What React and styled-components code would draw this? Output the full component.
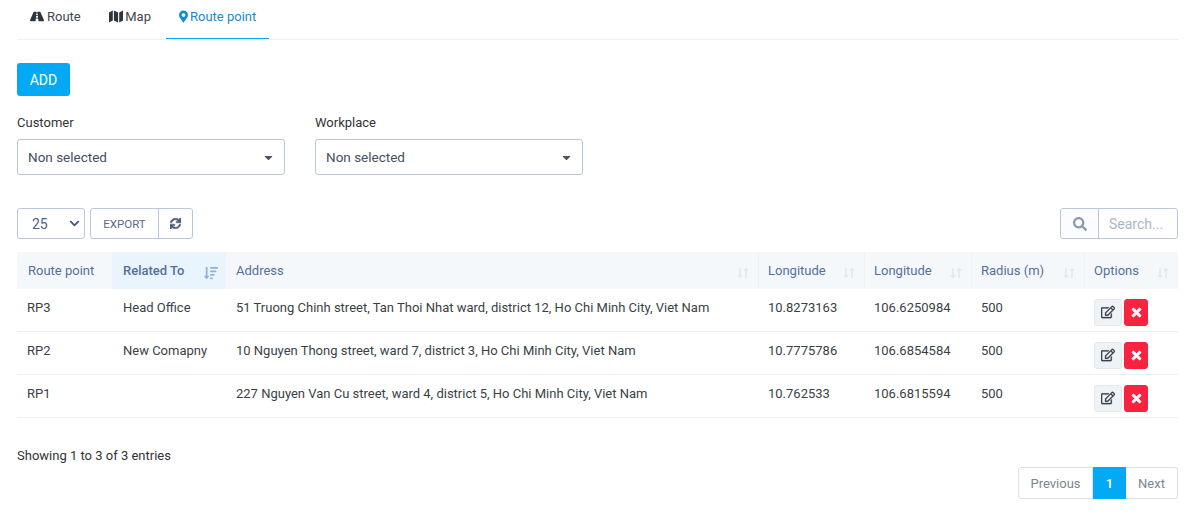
import { createGlobalStyle, styled } from "styled-components";
import {
  FaRoad,
  FaMapMarkerAlt,
  FaSearch,
  FaTimes,
  FaSync,
  FaRegEdit,
  FaCaretDown,
  FaChevronDown,
  FaSortAmountDown,
  FaLongArrowAltUp,
  FaLongArrowAltDown,
} from "react-icons/fa";

const GlobalStyle = createGlobalStyle`
  html, body {
    margin: 0;
    background: #fff;
    font-family: Roboto, "Liberation Sans", sans-serif;
    font-size: 13px;
    color: #333;
    overflow: hidden;
  }
`;

const Page = styled.div`
  padding: 0 13px 0 17px;
  height: 513px;
  box-sizing: border-box;
`;

const Tabs = styled.div`
  display: flex;
  gap: 2px;
  height: 40px;
  border-bottom: 1px solid #eceff3;
  box-sizing: border-box;
`;

const Tab = styled.div`
  display: flex;
  align-items: center;
  gap: ${(p) => p.$gap}px;
  height: 39px;
  padding: 0 13px 5px;
  box-sizing: border-box;
  color: ${(p) => (p.$active ? "#1e88c9" : "#3f4650")};
  border-bottom: 1px solid ${(p) => (p.$active ? "#03a9f4" : "transparent")};
  svg {
    width: ${(p) => (p.$active ? 9 : 14)}px;
    height: 13px;
    color: ${(p) => (p.$active ? "#0f8fd0" : "#2f3540")};
  }
`;

const AddButton = styled.button`
  display: block;
  width: 53px;
  height: 33px;
  margin-top: 23px;
  padding: 0;
  border: 0;
  border-radius: 3px;
  background: #03a9f4;
  color: #fff;
  font: 400 14px Roboto, sans-serif;
`;

const Filters = styled.div`
  display: flex;
  gap: 30px;
  margin-top: 18px;
`;

const Field = styled.div`
  width: 268px;
`;

const Label = styled.div`
  height: 17px;
  line-height: 17px;
  margin-bottom: 8px;
  color: #333;
`;

const Picker = styled.div`
  display: flex;
  align-items: center;
  justify-content: space-between;
  height: 36px;
  padding: 0 9px 0 10px;
  box-sizing: border-box;
  border: 1px solid #b9c7d8;
  border-radius: 3px;
  font-size: 13.5px;
  color: #47505c;
  svg {
    font-size: 13px;
    color: #4a5462;
  }
`;

const Toolbar = styled.div`
  display: flex;
  align-items: stretch;
  height: 31px;
  margin-top: 33px;
`;

const PageSize = styled.div`
  display: flex;
  align-items: center;
  justify-content: space-between;
  width: 68px;
  box-sizing: border-box;
  padding: 0 4px 0 14px;
  margin-right: 5px;
  border: 1px solid #b9c7d8;
  border-radius: 3px;
  font-size: 14px;
  color: #4a6288;
  svg {
    font-size: 11px;
    color: #3c5a86;
  }
`;

const ButtonGroup = styled.div`
  display: flex;
  border: 1px solid #b9c7d8;
  border-radius: 3px;
`;

const GroupButton = styled.div`
  display: flex;
  align-items: center;
  justify-content: center;
  width: ${(p) => p.$width}px;
  box-sizing: border-box;
  font-size: 11.5px;
  color: #5a6a8a;
  & + & {
    border-left: 1px solid #b9c7d8;
  }
  svg {
    font-size: 11px;
    color: #4c5c78;
    stroke: currentColor;
    stroke-width: 24;
  }
`;

const SearchBox = styled.div`
  display: flex;
  width: 118px;
  margin-left: auto;
  box-sizing: border-box;
  border: 1px solid #b9c7d8;
  border-radius: 3px;
`;

const SearchIcon = styled.div`
  display: flex;
  align-items: center;
  justify-content: center;
  width: 38px;
  box-sizing: border-box;
  background: #fafcfe;
  border-right: 1px solid #b9c7d8;
  border-radius: 3px 0 0 3px;
  svg {
    font-size: 14px;
    color: #8c99aa;
  }
`;

const SearchText = styled.div`
  display: flex;
  align-items: center;
  padding-left: 10px;
  font-size: 14px;
  color: #a9b6c8;
`;

const Table = styled.table`
  width: 1161px;
  margin-top: 13px;
  border-collapse: separate;
  border-spacing: 0;
  table-layout: fixed;
`;

const Head = styled.th`
  position: relative;
  height: 37px;
  padding: 0 10px 0 ${(p) => p.$pad}px;
  box-sizing: border-box;
  text-align: left;
  font-weight: ${(p) => (p.$sorted ? 500 : 400)};
  color: #55709c;
  background: ${(p) => (p.$sorted ? "#eaf4fd" : "#f4f8fb")};
  border-left: 1px solid ${(p) => (p.$divider ? "#eef2f6" : "transparent")};
`;

const SortMark = styled.span`
  position: absolute;
  right: ${(p) => (p.$on ? 8 : 9)}px;
  top: 14px;
  display: flex;
  color: ${(p) => (p.$on ? "#8fb0d8" : "#e4eaf0")};
  svg {
    width: ${(p) => (p.$on ? 14 : 6)}px;
    height: 14px;
  }
`;

const Cell = styled.td`
  height: 43px;
  padding: 0 10px 6px ${(p) => p.$pad}px;
  box-sizing: border-box;
  color: #3a3f47;
  border-bottom: 1px solid #eceff3;
`;

const ActionCell = styled(Cell)`
  padding: 4px 0 0 10px;
`;

const Actions = styled.div`
  display: flex;
  gap: 2px;
`;

const ActionButton = styled.div`
  display: flex;
  align-items: center;
  justify-content: center;
  width: ${(p) => (p.$danger ? 24 : 28)}px;
  height: 27px;
  box-sizing: border-box;
  border-radius: 3px;
  background: ${(p) => (p.$danger ? "#f8233f" : "#f0f3f6")};
  border: 1px solid ${(p) => (p.$danger ? "#f8233f" : "#e4e8ed")};
  color: ${(p) => (p.$danger ? "#fff" : "#39424e")};
  font-size: ${(p) => (p.$danger ? 13 : 14)}px;
  svg {
    stroke: currentColor;
    stroke-width: ${(p) => (p.$danger ? 30 : 10)};
  }
`;

const Info = styled.div`
  margin-top: 30px;
  height: 15px;
  line-height: 15px;
  color: #333;
`;

const Pager = styled.div`
  display: flex;
  justify-content: flex-end;
  margin-top: 4px;
`;

const PageButton = styled.div`
  display: flex;
  align-items: center;
  justify-content: center;
  height: 32px;
  width: ${(p) => p.$width}px;
  box-sizing: border-box;
  border: 1px solid ${(p) => (p.$active ? "#03a9f4" : "#dfe1e4")};
  border-left-width: ${(p) => (p.$active ? 1 : p.$first ? 1 : 0)}px;
  border-radius: ${(p) => (p.$first ? "3px 0 0 3px" : p.$last ? "0 3px 3px 0" : "0")};
  background: ${(p) => (p.$active ? "#03a9f4" : "#fff")};
  color: ${(p) => (p.$active ? "#fff" : "#7c8591")};
  font-weight: ${(p) => (p.$active ? 500 : 400)};
`;

function MapIcon() {
  return (
    <svg viewBox="0 0 14 13" fill="currentColor">
      <path d="M0 2.4 3.8 .4V10.6L0 12.6Z" />
      <path d="M4.9 .4 9.1 2.4V12.6L4.9 10.6Z" />
      <path d="M10.2 2.4 14 .4V10.6L10.2 12.6Z" />
    </svg>
  );
}

const columns = [
  { title: "Route point", width: 95 },
  { title: "Related To", width: 114, sorted: true },
  { title: "Address", width: 532 },
  { title: "Longitude", width: 106 },
  { title: "Longitude", width: 107 },
  { title: "Radius (m)", width: 113 },
  { title: "Options", width: 94 },
];

const rows = [
  ["RP3", "Head Office", "51 Truong Chinh street, Tan Thoi Nhat ward, district 12, Ho Chi Minh City, Viet Nam", "10.8273163", "106.6250984", "500"],
  ["RP2", "New Comapny", "10 Nguyen Thong street, ward 7, district 3, Ho Chi Minh City, Viet Nam", "10.7775786", "106.6854584", "500"],
  ["RP1", "", "227 Nguyen Van Cu street, ward 4, district 5, Ho Chi Minh City, Viet Nam", "10.762533", "106.6815594", "500"],
];

export default function App() {
  return (
    <Page>
      <GlobalStyle />
      <Tabs>
        <Tab $gap={3}><FaRoad />Route</Tab>
        <Tab $gap={2.5}><MapIcon />Map</Tab>
        <Tab $gap={2} $active><FaMapMarkerAlt />Route point</Tab>
      </Tabs>
      <AddButton>ADD</AddButton>
      <Filters>
        <Field>
          <Label>Customer</Label>
          <Picker>Non selected<FaCaretDown /></Picker>
        </Field>
        <Field>
          <Label>Workplace</Label>
          <Picker>Non selected<FaCaretDown /></Picker>
        </Field>
      </Filters>
      <Toolbar>
        <PageSize>25<FaChevronDown /></PageSize>
        <ButtonGroup>
          <GroupButton $width={67}>EXPORT</GroupButton>
          <GroupButton $width={34}><FaSync /></GroupButton>
        </ButtonGroup>
        <SearchBox>
          <SearchIcon><FaSearch /></SearchIcon>
          <SearchText>Search...</SearchText>
        </SearchBox>
      </Toolbar>
      <Table>
        <colgroup>
          {columns.map((c, i) => <col key={i} width={c.width} />)}
        </colgroup>
        <thead>
          <tr>
            {columns.map((c, i) => (
              <Head
                key={i}
                $sorted={c.sorted}
                $divider={i > 2}
                $pad={i < 2 ? 10 : 9}
              >
                {c.title}
                {c.sorted ? (
                  <SortMark $on><FaSortAmountDown /></SortMark>
                ) : i > 1 ? (
                  <SortMark><FaLongArrowAltDown /><FaLongArrowAltUp /></SortMark>
                ) : null}
              </Head>
            ))}
          </tr>
        </thead>
        <tbody>
          {rows.map((row) => (
            <tr key={row[0]}>
              {row.map((v, i) => <Cell key={i} $pad={i === 1 ? 11 : 10}>{v}</Cell>)}
              <ActionCell>
                <Actions>
                  <ActionButton><FaRegEdit /></ActionButton>
                  <ActionButton $danger><FaTimes /></ActionButton>
                </Actions>
              </ActionCell>
            </tr>
          ))}
        </tbody>
      </Table>
      <Info>Showing 1 to 3 of 3 entries</Info>
      <Pager>
        <PageButton $first $width={75}>Previous</PageButton>
        <PageButton $active $width={33}>1</PageButton>
        <PageButton $last $width={52}>Next</PageButton>
      </Pager>
    </Page>
  );
}
